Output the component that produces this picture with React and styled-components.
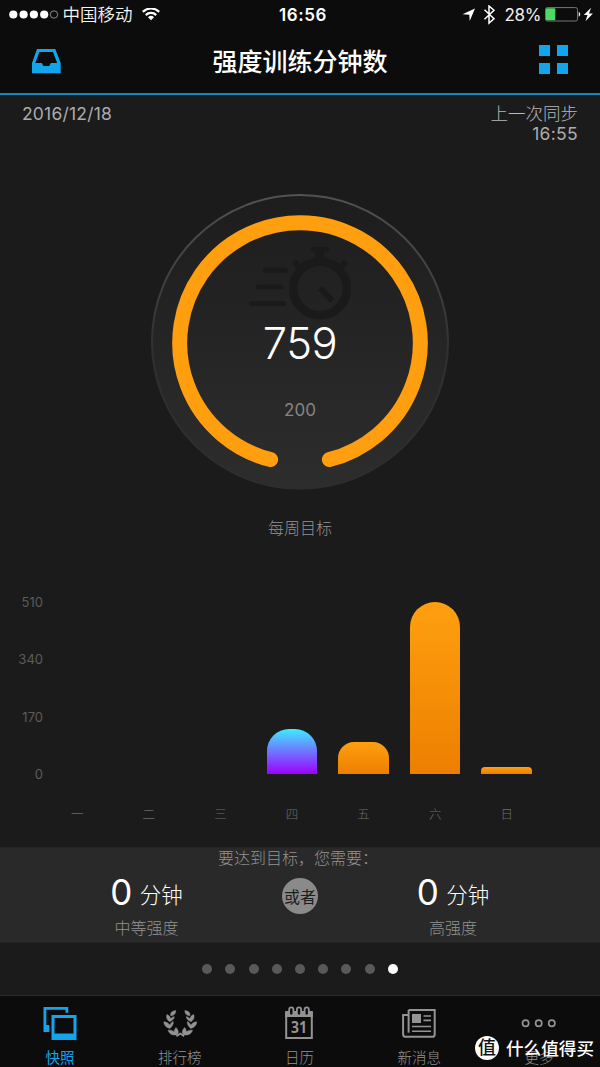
import React from 'react';
import styled, { createGlobalStyle } from 'styled-components';

const blue = '#12a5ec';
const orange = '#ff9f0f';
const grey = '#858585';

const GlobalStyle = createGlobalStyle`
  *, *::before, *::after { box-sizing: border-box; }
  body {
    margin: 0;
    background: #1b1b1b;
    font-family: Inter, "Noto Sans CJK SC", sans-serif;
    -webkit-font-smoothing: antialiased;
  }
  svg { display: block; flex: none; }
`;

const Screen = styled.div`
  position: relative;
  display: flex;
  flex-direction: column;
  width: 600px;
  height: 1067px;
  overflow: hidden;
  background: #1b1b1b;
  color: #fff;
`;

const Header = styled.header`
  height: 94.5px;
  background: #0c0c0c;
  border-bottom: 2px solid #1587bd;
`;

const StatusBar = styled.div`
  display: grid;
  grid-template-columns: 1fr auto 1fr;
  align-items: center;
  height: 30px;
  padding: 0 6px 0 9px;
  line-height: 30px;
`;

const StatusGroup = styled.div`
  display: flex;
  align-items: center;
  justify-content: ${(p) => (p.$end ? 'flex-end' : 'flex-start')};
  height: 30px;
`;

const Carrier = styled.span`
  margin: 0 9px 0 3.5px;
  font-size: 17.5px;
  font-weight: 350;
  color: #f4f4f4;
`;

const Clock = styled.time`
  padding: 0 0 0 3px;
  font-size: 17px;
  font-weight: 600;
  letter-spacing: 0.6px;
`;

const Percent = styled.span`
  margin: 0 4px 0 9px;
  font-size: 17px;
  color: #f0f0f0;
  letter-spacing: -0.4px;
`;

const NavBar = styled.div`
  display: flex;
  align-items: flex-start;
  justify-content: space-between;
  height: 63px;
  padding: 15px 32px 0 31px;
`;

const Title = styled.h1`
  margin: -1px 0 0;
  font-size: 25px;
  font-weight: 500;
  line-height: 36px;
`;

const SyncRow = styled.div`
  display: flex;
  justify-content: space-between;
  height: 97.5px;
  padding: 9px 22px 0;
  font-size: 17.5px;
  line-height: 20px;
  color: #acacac;
`;

const SyncDate = styled.span`
  letter-spacing: 0.2px;
`;

const SyncInfo = styled.div`
  display: flex;
  flex-direction: column;
  align-items: flex-end;
`;

const SyncLabel = styled.span`
  font-weight: 300;
  color: #b8b8b8;
`;

const SyncTime = styled.span`
  letter-spacing: 0.3px;
`;

const Gauge = styled.section`
  display: grid;
  justify-content: center;
  height: 300px;

  > * { grid-area: 1 / 1; }
`;

const GaugeText = styled.div`
  display: flex;
  flex-direction: column;
  align-items: center;
  padding-top: 126px;
`;

const GaugeValue = styled.strong`
  font-size: 43.5px;
  font-weight: 350;
  line-height: 50px;
  letter-spacing: -0.5px;
`;

const GaugeTarget = styled.span`
  margin-top: 32px;
  font-size: 17px;
  line-height: 20px;
  color: ${grey};
`;

const GoalLabel = styled.p`
  height: 110px;
  margin: 0;
  padding-top: 24px;
  text-align: center;
  font-size: 16px;
  font-weight: 300;
  line-height: 24px;
  color: #929292;
`;

const Chart = styled.section`
  display: grid;
  grid-template-columns: 43px 501px;
  grid-template-rows: 172px 73px;
  height: 245px;
  font-size: 12.5px;
  color: #5c5c5c;
`;

const Axis = styled.div`
  display: flex;
  flex-direction: column;
  justify-content: space-between;
  align-items: flex-end;
  margin: -8px 0;
  font-size: 13px;
  line-height: 16px;
`;

const Columns = styled.div`
  display: grid;
  grid-template-columns: repeat(7, 1fr);
  justify-items: center;
  align-items: end;
  margin-left: -1.5px;
  margin-right: 1.5px;
`;

const Bar = styled.div`
  width: 50.5px;
  border-radius: ${(p) => p.$radius}px ${(p) => p.$radius}px 0 0;
  background: ${(p) =>
    p.$cool
      ? 'linear-gradient(#40ebff, #9d00ff)'
      : `linear-gradient(${orange}, #ed7f00)`};
`;

const Days = styled(Columns)`
  grid-column: 2;
  align-items: start;
  padding-top: 31.5px;
  font-weight: 300;
  line-height: 18px;
  color: #6c6c6c;
`;

const Need = styled.section`
  display: flex;
  flex-direction: column;
  height: 96px;
  background: #292929;
  border-top: 1px solid #242424;
  border-bottom: 1px solid #242424;
  color: #929292;
  font-size: 16px;
  font-weight: 300;
`;

const NeedTitle = styled.p`
  height: 22px;
  margin: 0;
  padding-left: 218px;
  line-height: 20px;
`;

const NeedRow = styled.div`
  display: grid;
  grid-template-columns: 282px 36px 282px;
`;

const Option = styled.div`
  display: flex;
  flex-direction: column;
  align-items: center;
  padding: ${(p) => (p.$right ? '0 12px 0 0' : '0 0 0 11px')};
`;

const Amount = styled.div`
  display: flex;
  align-items: center;
  gap: 8px;
  height: 46px;
  color: #fff;
`;

const AmountNumber = styled.span`
  margin-top: -3px;
  font-size: 35px;
  font-weight: 400;
  line-height: 46px;
  letter-spacing: -0.5px;
`;

const AmountUnit = styled.span`
  margin-top: 3px;
  font-size: 21.5px;
  font-weight: 300;
  line-height: 30px;
`;

const OptionName = styled.span`
  line-height: 24px;
`;

const Or = styled.div`
  display: flex;
  align-items: center;
  justify-content: center;
  width: 36px;
  height: 36px;
  margin-top: 8px;
  border-radius: 50%;
  background: #8a8a8a;
  color: #1c1c1c;
  font-weight: 400;
  white-space: nowrap;
`;

const Pager = styled.div`
  display: flex;
  justify-content: center;
  align-items: center;
  gap: 13.2px;
  height: 52px;
`;

const Dot = styled.i`
  width: 10px;
  height: 10px;
  border-radius: 50%;
  background: ${(p) => (p.$on ? '#fff' : '#595959')};
`;

const TabBar = styled.nav`
  display: grid;
  grid-template-columns: repeat(5, 119.8px);
  height: 72px;
  border-top: 1px solid #2c2c2c;
  background: #0c0c0c;
`;

const Tab = styled.div`
  display: flex;
  flex-direction: column;
  align-items: center;
  padding-top: 7px;
  font-size: 14.5px;
  font-weight: ${(p) => (p.$on ? 400 : 300)};
  line-height: 20px;
  color: ${(p) => (p.$on ? blue : '#939393')};

  span { margin-top: 5px; }
`;

const Watermark = styled.div`
  position: absolute;
  right: 6px;
  bottom: 5px;
  display: flex;
  align-items: center;
  gap: 7px;
  font-size: 17.6px;
  font-weight: 500;
  line-height: 26px;

  span { margin-top: 2px; }
`;

const Seal = styled.b`
  width: 24px;
  height: 24px;
  border-radius: 50%;
  background: #fff;
  color: #111;
  font-size: 18px;
  font-weight: 500;
  line-height: 23px;
  text-align: center;
`;

const SignalIcon = () => (
  <svg width="50" height="12">
    {[4.3, 14.6, 24.9, 35.2].map((x) => (
      <circle key={x} cx={x} cy="5.5" r="4.1" fill="#fff" />
    ))}
    <circle cx="45" cy="5.5" r="3.7" fill="none" stroke="#aaa" strokeWidth=".8" />
  </svg>
);

const WifiIcon = () => (
  <svg width="18" height="14" fill="none" stroke="#fff" strokeWidth="2.2">
    <path d="M.8 3.9a11.6 11.6 0 0 1 16.4 0M3.8 7.1a7.4 7.4 0 0 1 10.4 0" />
    <path d="M9 12.2 6 9.2a4.3 4.3 0 0 1 6 0Z" fill="#fff" stroke="none" />
  </svg>
);

const StatusIcons = () => (
  <svg width="34" height="20">
    <path d="M.5 9.3 13 3.500 7.700 16 7.300 9.700Z" fill="#fff" />
    <path d="m22.500 4.800 9.500 8.900-5 4.300V1l5 4.300-9.500 8.900" fill="none" stroke="#fff" strokeWidth="1.500" />
  </svg>
);

const BatteryIcon = () => (
  <svg width="49" height="16">
    <rect x=".5" y=".6" width="32" height="13.4" rx="1.8" fill="none" stroke="#777" />
    <rect x="1" y="1.300" width="9.300" height="12" rx="1" fill="#4cd964" />
    <path d="M33.700 5.100c2 .6 2 4 0 4.600Z" fill="#eee" />
    <path d="m46.100.7-7.300 7.300h3.700l-2 6.200 7.400-7.700H44Z" fill="#fff" />
  </svg>
);

const InboxIcon = () => (
  <svg width="31" height="30" fill={blue}>
    <path
      fillRule="evenodd"
      d="M6 4h18.3l5.4 14v10.2H1V18ZM8.4 7 4.3 18h6.5l1.6 3h5.8l1.6-3h6.4L22 7Z"
    />
  </svg>
);

const GridIcon = () => (
  <svg width="30" height="30" fill={blue}>
    <path d="M1 0h11v11H1zM19 0h11v11H19zM1 18h11v11H1zM19 18h11v11H19z" />
  </svg>
);

const GaugeArt = () => (
  <svg width="300" height="300">
    <defs>
      <linearGradient id="disc" x2="0" y2="1">
        <stop stopColor="#1d1d1d" />
        <stop offset="1" stopColor="#2d2d2d" />
      </linearGradient>
      <linearGradient id="rim" x2="0" y2="1">
        <stop stopColor="#525252" />
        <stop offset=".55" stopColor="#303030" />
        <stop offset="1" stopColor="#2d2d2d" />
      </linearGradient>
    </defs>
    <ellipse cx="150" cy="149.8" rx="148" ry="146.8" fill="url(#disc)" stroke="url(#rim)" strokeWidth="2" />
    <g fill="none" stroke="#1a1a1a">
      <circle cx="170" cy="96.5" r="26.8" strokeWidth="8.5" />
      <path d="M160.7 57.2H179" strokeWidth="4.4" />
      <path d="M169.7 57v12" strokeWidth="9" />
      <path d="m143.8 69.5 6 6M196.2 69.5l-6 6" strokeWidth="6" />
      <path d="m170 96 12.3 12.7" strokeWidth="6" />
      <path d="M114.8 78.3h20.4M108.2 95h23M101.8 111.7h32" strokeWidth="5" strokeLinecap="round" />
    </g>
    <path
      d="M120.6 267.6A120.3 120.3 0 1 1 179.4 267.6"
      fill="none"
      stroke={orange}
      strokeWidth="15"
      strokeLinecap="round"
    />
  </svg>
);

const SnapshotIcon = () => (
  <svg width="40" height="40" fill="currentColor">
    <path d="M3.5 4h24.8v5.7h-2.8v-3H6.3V22h3v7H3.5Z" />
    <path fillRule="evenodd" d="M11.5 12h25v25h-25Zm3 3v15.5h19V15Z" />
  </svg>
);

const Branch = () => (
  <g stroke="currentColor" strokeWidth=".5">
    <path d="M15.8 7.6c-3.6.4-5.6 2-5.1 5.2 3.3-.1 5-1.8 5.1-5.2Z" />
    <path d="M6.9 11.600c-.8 2.700-.3 5 2.700 7.100 1.700-.9 4.300-2 4.800-5-1.800.2-2.900.8-3.700 2-.6-2-1.800-3.300-3.800-4.100Z" />
    <path d="M3.8 18.8c.4 3.400 2 5.700 6.200 6.600 1.800-1.700 3.600-4 3.300-7-1.900.9-3 2.200-3.300 3.900-1.400-2-3.400-3.300-6.200-3.500Z" />
    <path d="M8 27.2c1.500 3.900 4.500 5.700 9.700 4.200 1.200-2.200.6-4.500-1.700-6.800-1.200 1.200-1.700 2.600-1.500 4.200-1.900-1.400-4-1.800-6.500-1.600Z" />
  </g>
);

const LaurelIcon = () => (
  <svg width="40" height="40" fill="currentColor">
    <Branch />
    <g transform="translate(40.6 0) scale(-1 1)">
      <Branch />
    </g>
    <path d="m16.5 33.3 3.8-2.8 3.8 2.8" fill="none" stroke="currentColor" strokeWidth="1.7" />
  </svg>
);

const CalendarIcon = () => (
  <svg width="40" height="40" fill="none" stroke="currentColor">
    <path d="M7.2 9v25.9h25.6V9" strokeWidth="2" />
    <path d="M6.2 8h27.6v6H6.2z" fill="currentColor" stroke="none" />
    <g stroke="currentColor" fill="#0c0c0c" strokeWidth="1.8">
      <rect x="10.2" y="4.3" width="4.2" height="8.2" rx="2.1" />
      <rect x="17.9" y="4.3" width="4.2" height="8.2" rx="2.1" />
      <rect x="25.6" y="4.3" width="4.2" height="8.2" rx="2.1" />
    </g>
    <text
      x="20"
      y="29.7"
      textAnchor="middle"
      fill="currentColor"
      stroke="none"
      fontFamily="Noto Sans, sans-serif"
      fontSize="15.5"
      fontWeight="700"
      textLength="16"
      lengthAdjust="spacingAndGlyphs"
    >
      31
    </text>
  </svg>
);

const NewsIcon = () => (
  <svg width="40" height="40" fill="none" stroke="currentColor" strokeWidth="2">
    <path d="M9.6 6.900h26.100v24.500q0 2.400-2.400 2.400H7q-2.900 0-2.900-2.900V12h5.500" />
    <path d="M9.6 6.9v22.8" />
    <path d="M13 11h9v9h-9z" fill="currentColor" stroke="none" />
    <path d="M24.5 13h7.5M24.5 17.4h7.5M13 23.5h19M13 28.2h19" strokeWidth="1.6" />
  </svg>
);

const MoreIcon = () => (
  <svg width="40" height="40" fill="none" stroke="currentColor" strokeWidth="1.7">
    <circle cx="6.6" cy="20.3" r="3.1" />
    <circle cx="19.7" cy="20.3" r="3.1" />
    <circle cx="32.8" cy="20.3" r="3.1" />
  </svg>
);

const week = [
  { day: '一' },
  { day: '二' },
  { day: '三' },
  { day: '四', height: 45.5, radius: 22, cool: true },
  { day: '五', height: 32.5, radius: 16 },
  { day: '六', height: 172, radius: 25 },
  { day: '日', height: 7.5, radius: 4 },
];

const tabs = [
  { name: '快照', Icon: SnapshotIcon },
  { name: '排行榜', Icon: LaurelIcon },
  { name: '日历', Icon: CalendarIcon },
  { name: '新消息', Icon: NewsIcon },
  { name: '更多', Icon: MoreIcon },
];

export default function App() {
  return (
    <Screen>
      <GlobalStyle />
      <Header>
        <StatusBar>
          <StatusGroup>
            <SignalIcon />
            <Carrier>中国移动</Carrier>
            <WifiIcon />
          </StatusGroup>
          <Clock>16:56</Clock>
          <StatusGroup $end>
            <StatusIcons />
            <Percent>28%</Percent>
            <BatteryIcon />
          </StatusGroup>
        </StatusBar>
        <NavBar>
          <InboxIcon />
          <Title>强度训练分钟数</Title>
          <GridIcon />
        </NavBar>
      </Header>

      <SyncRow>
        <SyncDate>2016/12/18</SyncDate>
        <SyncInfo>
          <SyncLabel>上一次同步</SyncLabel>
          <SyncTime>16:55</SyncTime>
        </SyncInfo>
      </SyncRow>

      <Gauge>
        <GaugeArt />
        <GaugeText>
          <GaugeValue>759</GaugeValue>
          <GaugeTarget>200</GaugeTarget>
        </GaugeText>
      </Gauge>
      <GoalLabel>每周目标</GoalLabel>

      <Chart>
        <Axis>
          {[510, 340, 170, 0].map((n) => (
            <span key={n}>{n}</span>
          ))}
        </Axis>
        <Columns>
          {week.map((d) => (
            <Bar key={d.day} $radius={d.radius || 0} $cool={d.cool} style={{ height: d.height || 0 }} />
          ))}
        </Columns>
        <Days>
          {week.map((d) => (
            <span key={d.day}>{d.day}</span>
          ))}
        </Days>
      </Chart>

      <Need>
        <NeedTitle>要达到目标，您需要：</NeedTitle>
        <NeedRow>
          <Option>
            <Amount>
              <AmountNumber>0</AmountNumber>
              <AmountUnit>分钟</AmountUnit>
            </Amount>
            <OptionName>中等强度</OptionName>
          </Option>
          <Or>或者</Or>
          <Option $right>
            <Amount>
              <AmountNumber>0</AmountNumber>
              <AmountUnit>分钟</AmountUnit>
            </Amount>
            <OptionName>高强度</OptionName>
          </Option>
        </NeedRow>
      </Need>

      <Pager>
        {Array.from({ length: 9 }, (_, i) => (
          <Dot key={i} $on={i === 8} />
        ))}
      </Pager>

      <TabBar>
        {tabs.map(({ name, Icon }, i) => (
          <Tab key={name} $on={i === 0}>
            <Icon />
            <span>{name}</span>
          </Tab>
        ))}
      </TabBar>

      <Watermark>
        <Seal>值</Seal>
        <span>什么值得买</span>
      </Watermark>
    </Screen>
  );
}
